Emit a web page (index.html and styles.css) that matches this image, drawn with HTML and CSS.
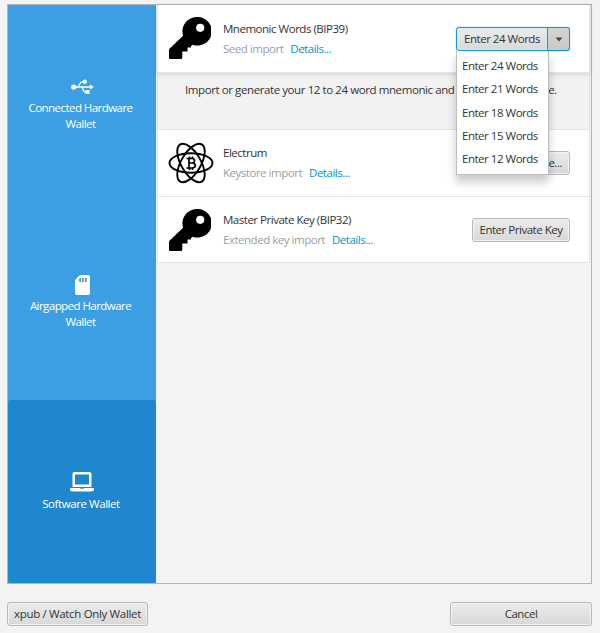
FILE: index.html
```html
<!DOCTYPE html>
<html lang="en">
<head>
<meta charset="utf-8">
<title>Add Wallet</title>
<link rel="stylesheet" href="styles.css">
</head>
<body>
<svg class="defs" width="0" height="0" aria-hidden="true">
  <symbol id="key" viewBox="0 0 42 42">
    <path fill-rule="evenodd" d="M27.500 0A14.300 14.300 0 1 1 23.600 27.700L22 29.300V30.500H18.500V34.500H13.300V40.500Q13.300 42 12 42H1.200Q0 42 0 40.700V33.300Q0 32.300.7 31.600L14.100 18.700A14.300 14.300 0 0 1 27.500 0ZM31.200 6.700A4.100 4.100 0 1 0 31.200 14.900A4.100 4.100 0 1 0 31.200 6.700Z"/>
  </symbol>
</svg>
<main class="frame">
  <nav class="sidebar">
    <a class="tab">
      <svg class="usb" width="23" height="16" viewBox="0 0 23 16"><g fill="none" stroke="#fff" stroke-width="1.300"><path d="M3 8H20M6 8C9 8 8 2.800 11 2.800H13M10 8C12.500 8 12 13 14 13H16"/></g><g fill="#fff"><circle cx="2.700" cy="8" r="2.600"/><circle cx="13.800" cy="2.800" r="2.200"/><path d="M14.500 11h4v4h-4zM19 5.500l4 2.500-4 2.500z"/></g></svg>
      <span>Connected Hardware<br>Wallet</span>
    </a>
    <a class="tab">
      <svg class="sd" width="15" height="20" viewBox="0 0 15 20"><path fill="#fff" fill-rule="evenodd" d="M5 0H13Q15 0 15 2V18Q15 20 13 20H2Q0 20 0 18V5ZM4.200 3V7H6V3ZM7.100 3V7H8.900V3ZM10 3V7H11.800V3Z"/></svg>
      <span>Airgapped Hardware<br>Wallet</span>
    </a>
    <a class="tab selected">
      <svg class="laptop" width="24" height="20" viewBox="0 0 24 20"><path fill="#fff" fill-rule="evenodd" d="M4.500 0H19.500Q21.500 0 21.500 2V15H2.500V2Q2.500 0 4.500 0ZM5 2.500V12.500H19V2.500ZM0 16H10L10.600 16.800H13.400L14 16H24V17Q24 19.500 21 19.500H3Q0 19.500 0 17Z"/></svg>
      <span>Software Wallet</span>
    </a>
  </nav>
  <section class="content">
    <article class="card first">
      <svg class="icon" width="42" height="42"><use href="#key"/></svg>
      <div class="info"><h2>Mnemonic Words (BIP39)</h2><p><span>Seed import</span><a>Details...</a></p></div>
      <div class="split">
        <button class="split-main">Enter 24 Words</button><button class="split-arrow"><svg width="8" height="5" viewBox="0 0 8 5"><path fill="#444" d="M.5.500H7.500L4 4.500Z"/></svg></button>
        <ul class="menu"><li>Enter 24 Words</li><li>Enter 21 Words</li><li>Enter 18 Words</li><li>Enter 15 Words</li><li>Enter 12 Words</li></ul>
      </div>
    </article>
    <div class="description">Import or generate your 12 to 24 word mnemonic and <span class="tight">optional passphrase.</span></div>
    <article class="card electrum">
      <svg class="icon atom" width="46" height="42" viewBox="-23 -21 46 42"><g fill="none" stroke="#000" stroke-width="1.900"><ellipse rx="21.500" ry="9.800"/><ellipse rx="21.500" ry="9.800" transform="rotate(60)"/><ellipse rx="21.500" ry="9.800" transform="rotate(-60)"/><path stroke-width="1.700" d="M-4.500-4.500H1Q3.500-4.500 3.500-2.200T1 0H-2M1 0Q4.300 0 4.300 2.500T1 5H-4.500M-2-4.500V5M-1.500-6.500V-4.500M1.500-6.500V-4.500M-1.500 5V7M1.500 5V7"/></g></svg>
      <div class="info"><h2>Electrum</h2><p><span>Keystore import</span><a>Details...</a></p></div>
      <button class="btn import">Import File...</button>
    </article>
    <article class="card">
      <svg class="icon" width="42" height="42"><use href="#key"/></svg>
      <div class="info"><h2>Master Private Key (BIP32)</h2><p><span>Extended key import</span><a>Details...</a></p></div>
      <button class="btn private">Enter Private Key</button>
    </article>
  </section>
</main>
<footer class="footer"><button class="btn xpub">xpub / Watch Only Wallet</button><button class="btn cancel">Cancel</button></footer>
</body>
</html>
```
FILE: styles.css
```css
* { box-sizing: border-box; }

body {
  margin: 0;
  width: 600px;
  height: 633px;
  padding: 4px 8px 0 7px;
  overflow: hidden;
  background: #f3f3f3;
  color: #333;
  font: 11.500px/16px "Open Sans", "Noto Sans", sans-serif;
  letter-spacing: -0.480px;
}

.defs { position: absolute; }

.frame {
  display: flex;
  height: 580px;
  border: 1px solid #b3b3b3;
}

.sidebar {
  flex: none;
  width: 148px;
  display: flex;
  flex-direction: column;
  background: #3d9fe3;
  letter-spacing: -0.550px;
}

.tab {
  height: 197.500px;
  display: flex;
  flex-direction: column;
  align-items: center;
  color: #fff;
  text-align: center;
  padding: 74px 3px 0 0;
}
.tab svg { margin: 0 0 5px 3px; }
.tab:nth-child(2) { padding-top: 72px; }
.tab:nth-child(2) svg { margin-bottom: 3px; }
.tab.selected { height: 183px; background: #1f87cf; border-radius: 3px; padding: 72px 2px 0 0; letter-spacing: -0.430px; }
.tab.selected svg { margin: 0 0 4px 2px; }

.content { flex: 1; padding: 0 1px; }

.card {
  display: flex;
  align-items: flex-start;
  height: 66px;
  padding: 12px 19px 0 11px;
  border: 1px solid #e5e5e5;
  border-top: 0;
  background: #fff;
}
.card.first { position: relative; height: 68px; box-shadow: 0 1px 5px rgba(0, 0, 0, .15); z-index: 1; }
.card.electrum { height: 68px; border-top: 1px solid #e5e5e5; }
.icon { flex: none; }
.atom { margin-left: -1px; }
.info { flex: 1; margin: 4px 0 0 12px; white-space: nowrap; }
.atom + .info { margin: 3px 0 0 9px; }
.card:last-child .info { margin-top: 3px; }
.info h2 { margin: 0 0 4px; font-size: 11.500px; font-weight: 400; line-height: 16px; }
.info p { margin: 0; color: #a0a0a0; }
.info a { margin-left: 7px; color: #0096c9; }

.description {
  height: 56px;
  padding: 9px 0 0 27px;
  border: 1px solid #e0e0e0;
  border-width: 0 1px;
  background: #f2f2f2;
  white-space: nowrap;
  letter-spacing: -0.410px;
}
.tight { letter-spacing: -0.620px; }

button { font: inherit; letter-spacing: inherit; color: #333; padding: 0; white-space: nowrap; }
.btn {
  height: 24px;
  border: 1px solid #b7b7b7;
  border-radius: 3px;
  background: linear-gradient(#ececec, #d8d8d8);
  box-shadow: inset 0 0 0 1px #f3f3f3;
}
.card .btn { margin-top: 9px; }
.import { width: 84px; padding-right: 7px; text-align: right; }
.private { width: 98px; }

.split { position: relative; display: flex; margin-top: 10px; width: 114px; height: 24px; border-radius: 3px; box-shadow: 0 0 1px #039ed3; }
.split button { border: 1px solid #039ed3; height: 24px; background: linear-gradient(#ececec, #d8d8d8); box-shadow: inset 0 0 0 1px #d5edf5; }
.split .split-main { width: 92px; border-radius: 3px 0 0 3px; }
.split .split-arrow { display: flex; align-items: center; justify-content: center; width: 22px; border-left: 0; border-radius: 0 3px 3px 0; background: linear-gradient(#d4d4d4, #c9c9c9); box-shadow: none; }

.menu {
  position: absolute;
  left: 0;
  top: 24px;
  width: 93px;
  height: 124px;
  margin: 0;
  padding: 3px 0 0 5px;
  list-style: none;
  border: 1px solid #bdbdbd;
  border-top: 0;
  background: #fff;
  box-shadow: 0 7px 9px rgba(0, 0, 0, .22);
  line-height: 23.250px;
  white-space: nowrap;
}

.footer { display: flex; justify-content: space-between; margin-top: 18px; }
.xpub { width: 141px; letter-spacing: -0.340px; }
.cancel { width: 142px; }
```
